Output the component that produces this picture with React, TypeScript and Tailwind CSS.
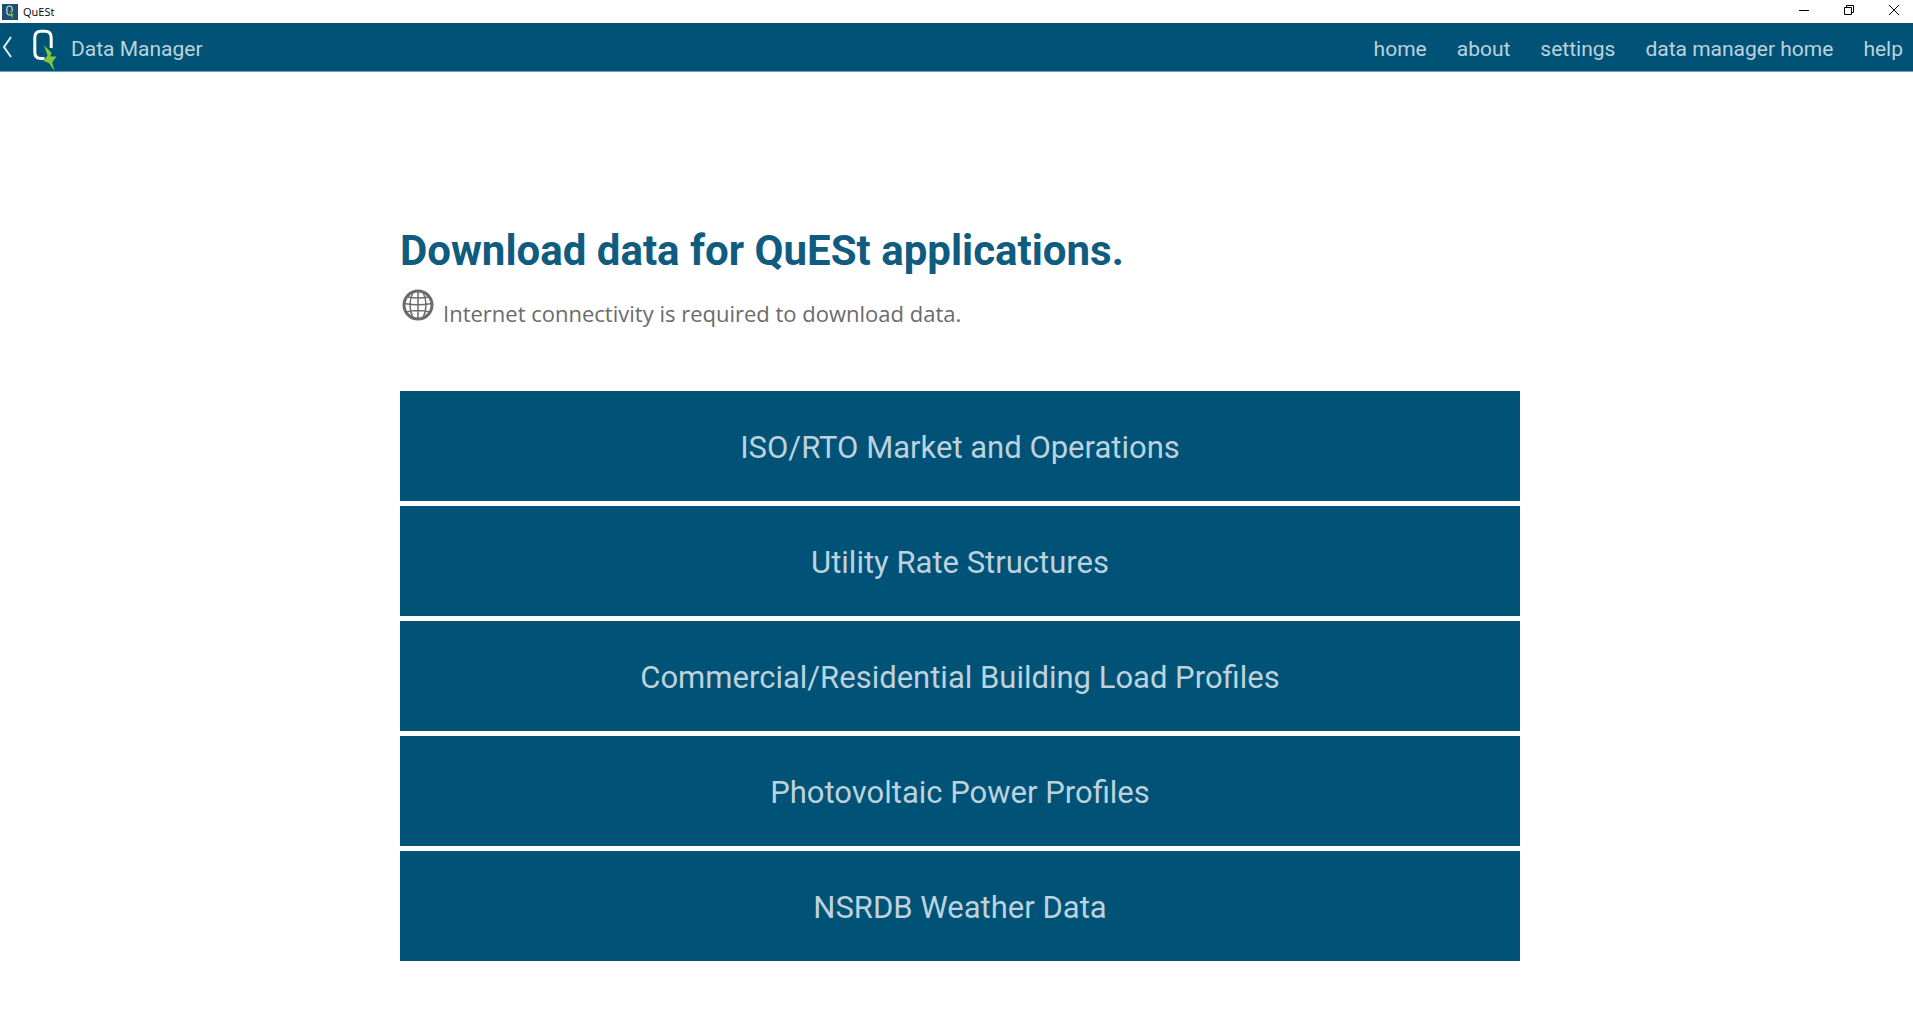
import React from "react";

const navItems = ["home", "about", "settings", "data manager home", "help"];

const sources = [
  "ISO/RTO Market and Operations",
  "Utility Rate Structures",
  "Commercial/Residential Building Load Profiles",
  "Photovoltaic Power Profiles",
  "NSRDB Weather Data",
];

function Logo({ className }: { className: string }) {
  return (
    <svg className={className} viewBox="0 0 25 43" fill="none" aria-hidden="true">
      <path
        d="M12.500 30.500H9Q2.800 30.500 2.800 24V9.500Q2.800 3.200 9 3.200H13Q19.200 3.200 19.200 9.500V20"
        stroke="#fff"
        strokeWidth="3"
      />
      <path
        d="M11.800 17L19.600 24.700L18.300 28.600H24.500L20.300 34.200L22.500 43L16.800 35L11.300 32.800L15.600 27.500Z"
        fill="#7ec63c"
      />
    </svg>
  );
}

function GlobeIcon() {
  return (
    <svg className="h-8 w-8 shrink-0" viewBox="0 0 32 32" fill="none" stroke="#6b6b6b" aria-hidden="true">
      <circle cx="16" cy="16" r="14" strokeWidth="3" />
      <path
        d="M16 2V30M2 14.500Q16 17 30 14.500M5.500 8Q16 10 26.500 8M4 23Q16 20 28 23M11 3Q5 16 11 29M21 3Q27 16 21 29"
        strokeWidth="1.500"
      />
    </svg>
  );
}

function TitleBar() {
  return (
    <div className="flex h-[23px] items-center justify-between bg-white pl-0.5">
      <div className="flex items-center gap-[5px]">
        <span className="flex h-4 w-4 items-center justify-center bg-[#1d4f72]">
          <Logo className="h-[14px] w-2" />
        </span>
        <span className="font-['Open_Sans',sans-serif] text-[11px] leading-4 text-black">QuESt</span>
      </div>
      <div className="flex h-full pb-[3px] text-black">
        <button aria-label="Minimize" className="flex w-[45px] items-center justify-center">
          <svg className="h-[10px] w-[10px]" viewBox="0 0 10 10" stroke="currentColor" aria-hidden="true">
            <path d="M0 5.500H10" />
          </svg>
        </button>
        <button aria-label="Restore" className="flex w-[45px] items-center justify-center">
          <svg className="h-[10px] w-[10px]" viewBox="0 0 10 10" fill="none" stroke="currentColor" aria-hidden="true">
            <path d="M.5 2.500H7.500V9.500H.5ZM2.500 2.500V.5H9.500V7.500H7.500" />
          </svg>
        </button>
        <button aria-label="Close" className="flex w-[42px] items-center justify-center pl-1">
          <svg className="h-[10px] w-[10px]" viewBox="0 0 10 10" stroke="currentColor" aria-hidden="true">
            <path d="M0 0L10 10M10 0L0 10" />
          </svg>
        </button>
      </div>
    </div>
  );
}

function Header() {
  return (
    <header className="flex h-[49px] items-center justify-between border-b border-[#6fa0b8] bg-[#005377] pr-[10px] text-[21px] leading-7 text-[#bdd2dc]">
      <div className="flex h-full items-center">
        <button aria-label="Back" className="flex w-8 pl-[2px]">
          <svg className="h-[22px] w-[10px]" viewBox="0 0 10 22" fill="none" stroke="#e4edf1" strokeWidth="2" aria-hidden="true">
            <path d="M9 1L2 11L9 21" />
          </svg>
        </button>
        <Logo className="h-[43px] w-[25px] self-end" />
        <span className="ml-[14px] pt-1">Data Manager</span>
      </div>
      <nav className="flex gap-[30px] pt-1">
        {navItems.map((item) => (
          <a key={item} href="#">
            {item}
          </a>
        ))}
      </nav>
    </header>
  );
}

export default function App() {
  return (
    <div className="min-h-screen bg-white font-['Roboto',sans-serif]">
      <TitleBar />
      <Header />
      <main className="pt-[153px] pr-[393px] pl-[400px]">
        <h1 className="text-[42px] leading-[52px] font-bold text-[#0f5c80]">Download data for QuESt applications.</h1>
        <div className="mt-3 flex gap-[9px] pl-[2px]">
          <GlobeIcon />
          <p className="pt-[10px] font-['Open_Sans',sans-serif] text-[22px] leading-7 text-[#6b6b6b]">
            Internet connectivity is required to download data.
          </p>
        </div>
        <div className="mt-16 flex flex-col gap-[5px]">
          {sources.map((source) => (
            <button key={source} className="h-[110px] bg-[#005377] pt-1 text-[31px] leading-10 text-[#bdd2dc]">
              {source}
            </button>
          ))}
        </div>
      </main>
    </div>
  );
}
